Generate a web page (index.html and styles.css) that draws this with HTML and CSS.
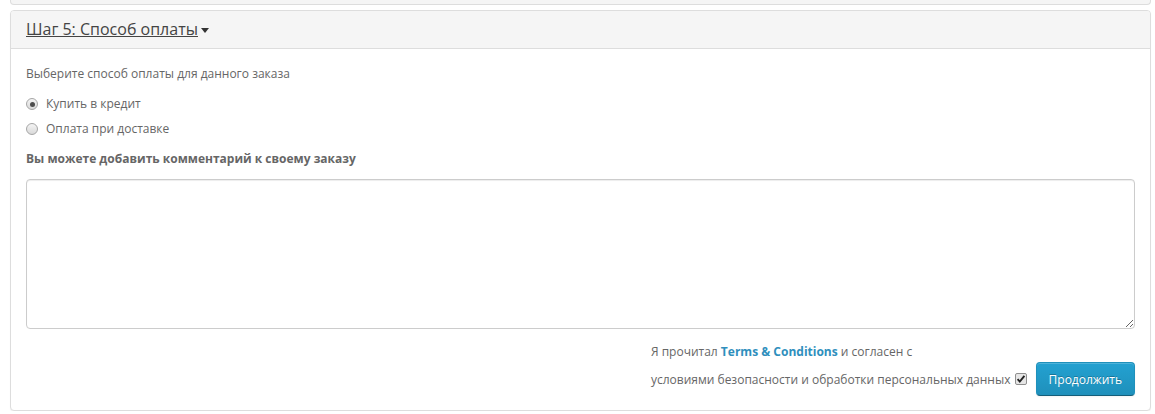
FILE: index.html
```html
<!DOCTYPE html>
<html lang="ru">
<head>
<meta charset="utf-8">
<title>Шаг 5: Способ оплаты</title>
<link rel="stylesheet" href="styles.css">
</head>
<body>
<div class="page">
  <div class="panel-prev"></div>
  <div class="panel">
    <div class="panel-heading">
      <h4 class="panel-title"><a href="#" class="title-link">Шаг 5: Способ оплаты</a><span class="caret"></span></h4>
    </div>
    <div class="panel-body">
      <p class="intro">Выберите способ оплаты для данного заказа</p>
      <div class="radio"><label><span class="radio-box checked"></span>Купить в кредит</label></div>
      <div class="radio radio-next"><label><span class="radio-box"></span>Оплата при доставке</label></div>
      <p class="comment-label"><strong>Вы можете добавить комментарий к своему заказу</strong></p>
      <textarea class="form-control" rows="8"></textarea>
      <div class="buttons">
        <div class="agree">Я прочитал <a href="#" class="terms"><b>Terms &amp; Conditions</b></a> и согласен с<br>условиями безопасности и обработки персональных данных <span class="checkbox"><svg viewBox="0 0 12 12" width="12" height="12"><rect x="0.5" y="0.5" width="11" height="11" rx="1.5" fill="#e6e6e6" stroke="#8f8f8f"/><path d="M2.6 6.2 L4.8 8.6 L9.4 2.9" fill="none" stroke="#222" stroke-width="1.9"/></svg></span><button type="button" class="btn-primary">Продолжить</button></div>
      </div>
    </div>
  </div>
</div>
</body>
</html>
```
FILE: styles.css
```css
html, body {
  margin: 0;
  padding: 0;
  background: #fff;
}
body {
  font-family: "Open Sans", "Liberation Sans", sans-serif;
  font-size: 12px;
  line-height: 20px;
  color: #666;
}
.page {
  padding: 0 4px 0 10px;
}
.panel-prev {
  height: 4px;
  background: #f5f5f5;
  border: 1px solid #ddd;
  border-top: none;
  border-radius: 0 0 4px 4px;
  margin-bottom: 5px;
}
.panel {
  border: 1px solid #ddd;
  border-radius: 4px;
  background: #fff;
  box-shadow: 0 1px 1px rgba(0,0,0,0.05);
}
.panel-heading {
  background: #f5f5f5;
  border-bottom: 1px solid #ddd;
  border-radius: 3px 3px 0 0;
  padding: 10px 15px;
}
.panel-title {
  margin: 0;
  font-size: 16px;
  line-height: 17px;
  font-weight: normal;
  color: #444;
}
.title-link {
  color: #444;
  text-decoration: underline;
}
.caret {
  display: inline-block;
  width: 0;
  height: 0;
  margin-left: 3px;
  vertical-align: middle;
  border-top: 5px solid #333;
  border-left: 4px solid transparent;
  border-right: 4px solid transparent;
}
.panel-body {
  padding: 15px 15px 14px;
}
.intro {
  margin: 0 0 10px;
}
.radio {
  margin: 10px 0;
}
.radio-next {
  margin-top: -5px;
}
.radio label {
  display: flex;
  align-items: center;
  cursor: pointer;
}
.radio-box {
  box-sizing: border-box;
  width: 12px;
  height: 12px;
  border-radius: 50%;
  border: 1px solid #a6a6a6;
  background: linear-gradient(#f4f4f4, #d9d9d9);
  margin: 0 8px 0 0;
  position: relative;
}
.radio-box.checked::after {
  content: "";
  position: absolute;
  left: 2.5px;
  top: 2.5px;
  width: 5px;
  height: 5px;
  border-radius: 50%;
  background: #4d4d4d;
}
.comment-label {
  margin: 0 0 10px;
  color: #666;
}
.form-control {
  display: block;
  box-sizing: border-box;
  width: 100%;
  height: 150px;
  margin: 0;
  padding: 8px 12px;
  border: 1px solid #ccc;
  border-radius: 4px;
  box-shadow: inset 0 1px 1px rgba(0,0,0,0.075);
  font-family: inherit;
  font-size: 12px;
  resize: vertical;
}
.buttons {
  display: flex;
  justify-content: flex-end;
  margin-top: 13px;
}
.agree {
  line-height: 20px;
}
.terms {
  color: #2f8fbd;
  text-decoration: none;
}
.checkbox {
  display: inline-block;
  vertical-align: -1px;
  margin-left: 1px;
}
.checkbox svg {
  display: block;
}
.btn-primary {
  margin-left: 9px;
  padding: 7.5px 12px;
  font-family: inherit;
  font-size: 12px;
  line-height: 17px;
  color: #fff;
  background: linear-gradient(#23a1d1, #1f90bb);
  border: 1px solid #1f90bb;
  border-bottom-color: #145e7a;
  border-radius: 4px;
  text-shadow: 0 -1px 0 rgba(0,0,0,0.25);
  box-shadow: inset 0 1px 0 rgba(255,255,255,0.2), 0 1px 2px rgba(0,0,0,0.05);
  cursor: pointer;
}
```
